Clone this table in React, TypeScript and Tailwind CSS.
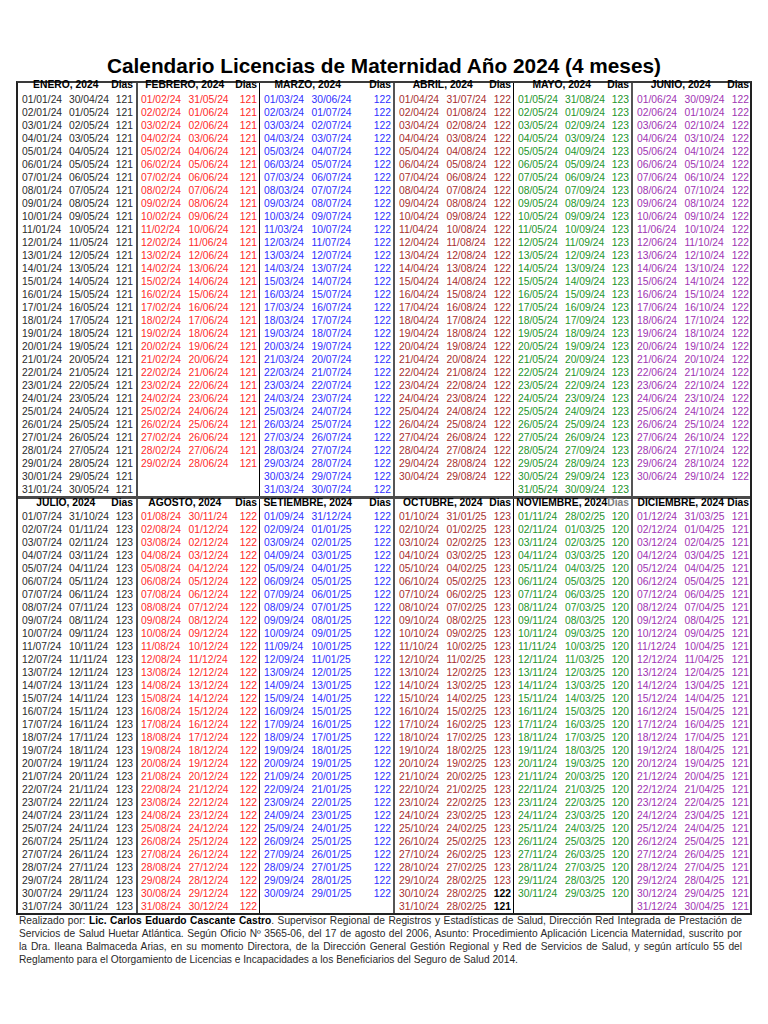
import React from 'react'

const MONTHS = [
  'ENERO', 'FEBRERO', 'MARZO', 'ABRIL', 'MAYO', 'JUNIO',
  'JULIO', 'AGOSTO', 'SETIEMBRE', 'OCTUBRE', 'NOVIEMBRE', 'DICIEMBRE',
]

// per column inside a block of six months
const COL_CLS = [
  'w-[120px] border-r-2 border-[#4d4d4d]',
  'w-[122px] border-r border-black',
  'w-[135px] border-r-2 border-[#555]',
  'w-[119px] border-r border-black',
  'w-[119px] border-r-2 border-[#555]',
  'w-[117px]',
]
const PAD = ['pl-[4px] pr-[3px]', 'pl-[3px] pr-[2px]', 'pl-[4px] pr-[2px]', 'pl-[4px] pr-[2px]', 'pl-[4px] pr-[2px]', 'pl-[4px] pr-[1px]']
const COLORS = ['text-[#2b2b2b]', 'text-[#ff2a2a]', 'text-[#2f2fff]', 'text-[#a82e2e]', 'text-[#23952b]', 'text-[#a033b3]']

type Row = { start: string; end: string; days: number; capped: boolean }

const pad2 = (n: number) => String(n).padStart(2, '0')
const fmt = (t: number) => {
  const d = new Date(t)
  return `${pad2(d.getUTCDate())}/${pad2(d.getUTCMonth() + 1)}/${pad2(d.getUTCFullYear() % 100)}`
}

function rowsFor(m: number): Row[] {
  const n = new Date(Date.UTC(2024, m + 1, 0)).getUTCDate()
  const last = new Date(Date.UTC(2024, m + 5, 0)).getUTCDate()
  return Array.from({ length: n }, (_, k) => {
    const d = k + 1
    const start = Date.UTC(2024, m, d)
    let end: number
    let capped = false
    if (d === 1) {
      end = Date.UTC(2024, m + 4, 0)
    } else {
      capped = d - 1 > last
      end = Date.UTC(2024, m + 4, Math.min(d - 1, last))
    }
    const days = Math.round((end - start) / 86400000) + 1
    return { start: fmt(start), end: fmt(end), days, capped }
  })
}

function MonthColumn({ m, idx, second }: { m: number; idx: number; second: boolean }) {
  const rows = rowsFor(m)
  const blanks = 31 - rows.length
  return (
    <div className={`flex flex-col ${COL_CLS[idx]}`}>
      <div className={`flex font-bold text-black ${PAD[idx]} ${second ? 'h-[11.4px] leading-[8.7px]' : 'h-[9.6px] leading-[4.5px]'}`}>
        <div className="flex w-[87.5px] justify-center">
          <span className="whitespace-nowrap">{MONTHS[m]}, 2024</span>
        </div>
        <span className={`flex-1 text-right ${m === 10 ? 'text-[#7a7a7a]' : ''}`}>Dias</span>
      </div>
      {rows.map((r) => (
        <div key={r.start} className={`flex h-[13px] leading-[13px] ${PAD[idx]} ${COLORS[idx]}`}>
          <span className="w-[47.5px]">{r.start}</span>
          <span className="w-[47.5px]">{r.end}</span>
          <span className={`flex-1 text-right ${r.capped ? 'font-bold text-black' : ''}`}>{r.days}</span>
        </div>
      ))}
      {Array.from({ length: blanks }, (_, k) => (
        <div key={'b' + k} className="h-[13px]" />
      ))}
    </div>
  )
}

function Block({ from, second }: { from: number; second: boolean }) {
  return (
    <div className={`flex ${second ? 'border-t-[3px] border-[#4a4a4a]' : ''}`}>
      {[0, 1, 2, 3, 4, 5].map((i) => (
        <MonthColumn key={i} m={from + i} idx={i} second={second} />
      ))}
    </div>
  )
}

const Footer = () => (
  <div className="ml-[19px] w-[723px] text-[10.2px] leading-[12.9px] text-[#2a2a2a]">
    <div className="whitespace-nowrap text-justify [text-align-last:justify]">
      Realizado por: <b className="text-black">Lic. Carlos Eduardo Cascante Castro</b>. Supervisor Regional de Registros y
      Estadísticas de Salud, Dirección Red Integrada de Prestación de
    </div>
    <div className="whitespace-nowrap text-justify [text-align-last:justify]">
      Servicios de Salud Huetar Atlántica. Según Oficio Nº 3565-06, del 17 de agosto del 2006, Asunto: Procedimiento
      Aplicación Licencia Maternidad, suscrito por
    </div>
    <div className="whitespace-nowrap text-justify [text-align-last:justify]">
      la Dra. Ileana Balmaceda Arias, en su momento Directora, de la Dirección General Gestión Regional y Red de Servicios
      de Salud, y según artículo 55 del
    </div>
    <div className="whitespace-nowrap">
      Reglamento para el Otorgamiento de Licencias e Incapacidades a los Beneficiarios del Seguro de Salud 2014.
    </div>
  </div>
)

export default function App() {
  return (
    <div className="min-h-[1024px] w-[768px] bg-white pt-[54px] font-['Liberation_Sans',Arial,sans-serif]">
      <h1 className="text-center text-[20.8px] font-bold leading-[24px] text-black">
        Calendario Licencias de Maternidad Año 2024 (4 meses)
      </h1>
      {/* table: two blocks of six months */}
      <div className="ml-[16px] mt-[3px] w-[736px] border-x-2 border-t-2 border-b-2 border-x-[#222] border-t-[#3a3a3a] border-b-[#222] text-[10.3px]">
        <Block from={0} second={false} />
        <Block from={6} second={true} />
      </div>
      <Footer />
    </div>
  )
}
